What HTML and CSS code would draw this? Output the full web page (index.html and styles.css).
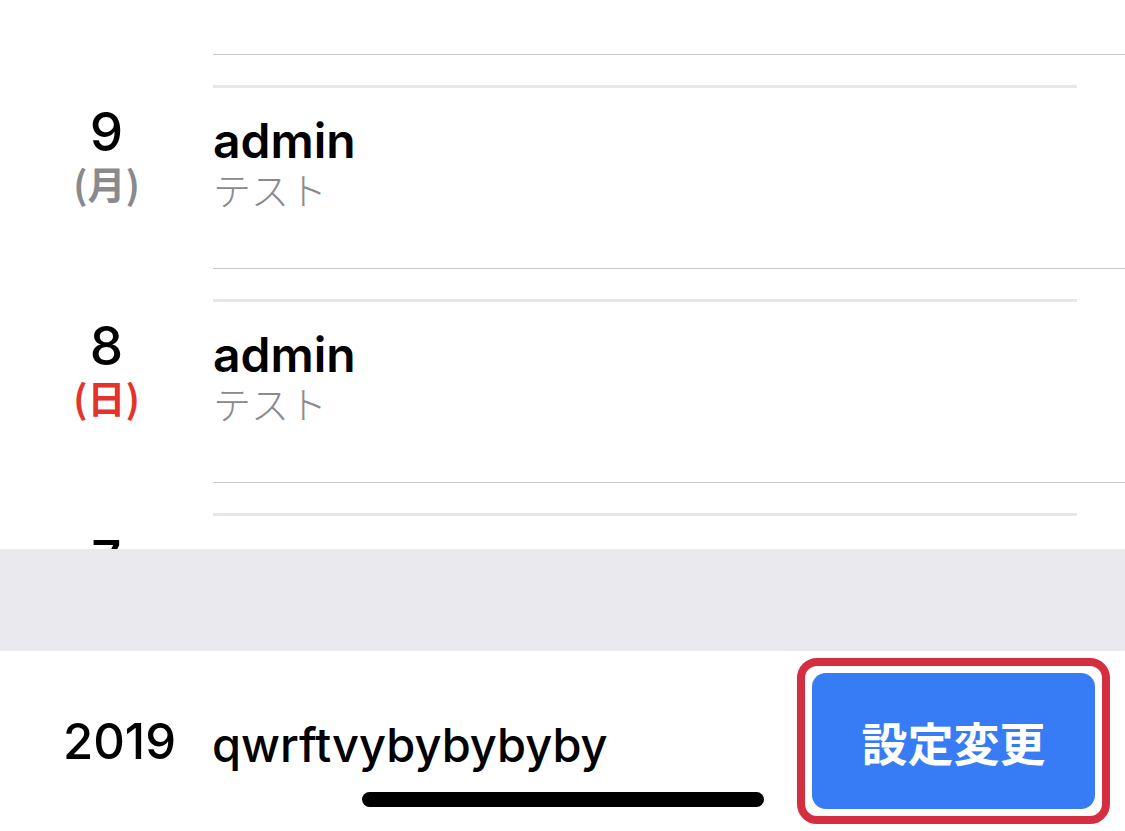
FILE: index.html
```html
<!DOCTYPE html>
<html lang="ja">
<head>
    <meta charset="UTF-8">
    <meta name="viewport" content="width=device-width, initial-scale=1.0">
    <title>履歴</title>
    <link rel="stylesheet" href="styles.css">
</head>

<body>
    <div class="screen">
        <div class="list">
            <div class="item">
                <div class="date">
                    <div class="day">9</div>
                    <div class="week">(月)</div>
                </div>
                <div class="body">
                    <div class="card">
                        <div class="name">admin</div>
                        <div class="note">テスト</div>
                    </div>
                </div>
            </div>
            <div class="item">
                <div class="date">
                    <div class="day">8</div>
                    <div class="week sunday">(日)</div>
                </div>
                <div class="body">
                    <div class="card">
                        <div class="name">admin</div>
                        <div class="note">テスト</div>
                    </div>
                </div>
            </div>
            <div class="item">
                <div class="date">
                    <div class="day">7</div>
                </div>
                <div class="body">
                    <div class="card"></div>
                </div>
            </div>
        </div>

        <div class="band"></div>

        <div class="footer">
            <div class="year">2019</div>
            <div class="title">qwrftvybybybyby</div>
            <div class="focus">
                <button class="settings">設定変更</button>
            </div>
            <div class="home-bar"></div>
        </div>
    </div>
</body>
</html>
```

FILE: styles.css
```css
body {
    margin: 0;
    padding: 0;
    background: #fff;
    font-family: Inter, "Noto Sans CJK JP", sans-serif;
    color: #000;
}

.screen {
    width: 1125px;
    height: 831px;
    overflow: hidden;
    display: flex;
    flex-direction: column;
}

.list {
    height: 549px;
    box-sizing: border-box;
    padding-top: 54px;
    overflow: hidden;
}

.item {
    display: flex;
    height: 214px;
}

.date {
    width: 213px;
    flex-shrink: 0;
    display: flex;
    flex-direction: column;
    align-items: center;
    padding-top: 50px;
}

.day {
    font-size: 53px;
    font-weight: 500;
    line-height: 56px;
}

.week {
    font-family: "Noto Sans CJK JP", sans-serif;
    font-size: 38px;
    font-weight: 700;
    line-height: 46px;
    color: #8a8a8e;
}

.week.sunday {
    color: #e4332b;
}

.body {
    flex: 1;
    border-top: 1px solid #c8c7cc;
    padding-top: 30px;
}

.card {
    margin-right: 48px;
    border-top: 3px solid #e5e7ee;
    padding-top: 28px;
}

.name {
    font-size: 48px;
    font-weight: 600;
    line-height: 50px;
}

.note {
    font-family: "Noto Sans CJK JP", sans-serif;
    font-size: 38px;
    font-weight: 300;
    line-height: 46px;
    color: #8a8a8e;
}

.band {
    height: 102px;
    background: #e9e9ee;
}

.footer {
    position: relative;
    flex: 1;
    display: flex;
    align-items: center;
    padding-left: 63px;
    padding-right: 15px;
}

.year {
    font-size: 49px;
    font-weight: 500;
    width: 149px;
}

.title {
    flex: 1;
    font-size: 47px;
    font-weight: 500;
    padding-top: 6px;
}

.focus {
    border: 8px solid #d52e40;
    border-radius: 20px;
    padding: 7px;
}

.settings {
    display: block;
    width: 283px;
    height: 136px;
    border: none;
    border-radius: 14px;
    background: #377bf5;
    color: #fff;
    font-family: "Noto Sans CJK JP", sans-serif;
    font-size: 46px;
    font-weight: 700;
}

.home-bar {
    position: absolute;
    left: 362px;
    bottom: 24px;
    width: 402px;
    height: 15px;
    border-radius: 8px;
    background: #000;
}
```
